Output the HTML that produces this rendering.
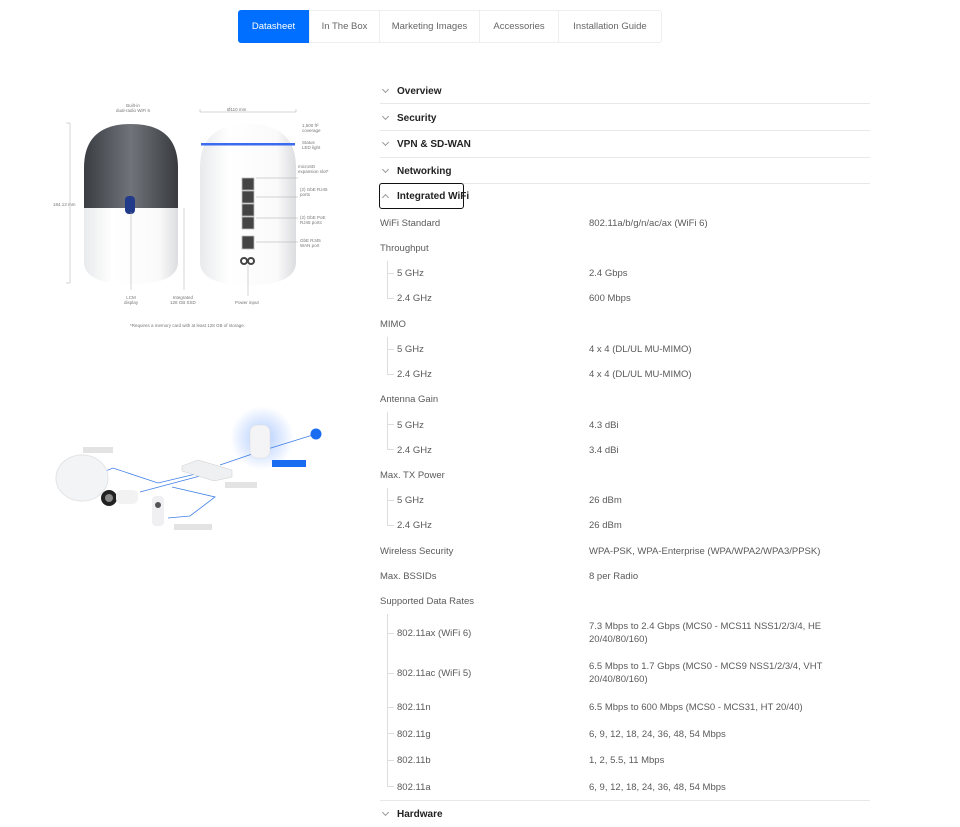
<!DOCTYPE html>
<html><head><meta charset="utf-8"><style>
*{margin:0;padding:0;box-sizing:border-box}
body{width:960px;height:827px;background:#fff;position:relative;overflow:hidden;font-family:"Liberation Sans",sans-serif;color:#555}
.a{position:absolute;white-space:nowrap}
.tabs{position:absolute;left:238px;top:10px;width:424px;height:33px;border:1px solid #eceef0;border-radius:3px;display:flex;font-size:9.5px;color:#666}
.tabs div{height:31px;line-height:31px;text-align:center;border-right:1px solid #eceef0}
.tabs .on{background:#006fff;color:#fff;border-radius:3px 0 0 3px;margin:-1px 0 -1px -1px;height:33px;line-height:33px}
.h{position:absolute;left:380px;font-size:10px;font-weight:bold;color:#222;transform:translateY(2px)}
.h i{display:inline-block;width:5px;height:5px;border-right:1px solid #999;border-bottom:1px solid #999;transform:rotate(45deg);margin:0 9px 2px 3px}
.ln{position:absolute;left:380px;width:490px;height:1px;background:#e6e8ea}
.l{position:absolute;left:380px;font-size:9.5px;color:#5a5a5a;transform:translateY(1px)}
.s{left:397px}
.v{position:absolute;left:589px;font-size:9.5px;color:#5a5a5a;line-height:13px;transform:translateY(1px)}
.vl{position:absolute;left:387px;width:1px;background:#ddd}
.tk{position:absolute;left:387px;width:7px;height:1px;background:#ddd}
.cap{position:absolute;font-size:4.5px;color:#777;text-align:center;line-height:5px}
</style></head><body>
<div class="tabs"><div class="on" style="width:72px">Datasheet</div><div style="width:70px">In The Box</div><div style="width:100px">Marketing Images</div><div style="width:79px">Accessories</div><div style="width:102px;border-right:none">Installation Guide</div></div>

<svg class="a" style="left:40px;top:95px" width="320" height="240" viewBox="40 95 320 240">
<defs><linearGradient id="g1" x1="0" x2="1"><stop offset="0" stop-color="#e9eaec"/><stop offset=".3" stop-color="#fff"/><stop offset=".8" stop-color="#fafafa"/><stop offset="1" stop-color="#dcdde0"/></linearGradient>
<linearGradient id="g2" x1="0" x2="1"><stop offset="0" stop-color="#3a3d42"/><stop offset=".5" stop-color="#70747a"/><stop offset="1" stop-color="#383a3e"/></linearGradient></defs>
<path d="M84 208 V168 Q84 124 131 124 Q178 124 178 168 V208Z" fill="url(#g2)"/>
<path d="M84 208 H178 V262 Q178 284 131 284 Q84 284 84 262Z" fill="url(#g1)"/>
<rect x="125" y="196" width="10" height="18" rx="4" fill="#223a8a"/>
<path d="M200 168 Q200 124 248 124 Q296 124 296 168 V262 Q296 285 248 285 Q200 285 200 262Z" fill="url(#g1)"/>
<rect x="201" y="143" width="94" height="2.5" fill="#3d6bf0"/>
<g fill="#444" stroke="#bbb" stroke-width=".8"><rect x="242" y="178" width="12" height="12"/><rect x="242" y="191" width="12" height="12"/><rect x="242" y="204" width="12" height="12"/><rect x="242" y="217" width="12" height="12"/><rect x="242" y="236" width="12" height="13"/></g>
<circle cx="244" cy="261" r="3" fill="none" stroke="#444" stroke-width="2"/><circle cx="251" cy="261" r="3" fill="none" stroke="#444" stroke-width="2"/>
<g stroke="#aaa" stroke-width=".5" fill="none"><path d="M66 123 H70 V283 H66"/><path d="M200 109 V112 H296 V109"/><path d="M131 212 V290"/><path d="M184 208 V290"/><path d="M248 265 V296"/><path d="M256 178 H298 M256 197 H298 M256 218 H298 M256 242 H298"/></g>
</svg>
<div class="cap" style="left:116px;top:103px">Built-in<br>dual-radio WiFi 6</div>
<div class="cap" style="left:227px;top:107px">Ø110 mm</div>
<div class="cap" style="left:53px;top:202px">184.13 mm</div>
<div class="cap" style="left:302px;top:123px;text-align:left">1,500 ft²<br>coverage</div>
<div class="cap" style="left:302px;top:140px;text-align:left">Status<br>LED light</div>
<div class="cap" style="left:298px;top:164px;text-align:left">microSD<br>expansion slot*</div>
<div class="cap" style="left:300px;top:187px;text-align:left">(2) GbE RJ45<br>ports</div>
<div class="cap" style="left:300px;top:215px;text-align:left">(2) GbE PoE<br>RJ45 ports</div>
<div class="cap" style="left:300px;top:238px;text-align:left">GbE RJ45<br>WAN port</div>
<div class="cap" style="left:124px;top:295px">LCM<br>display</div>
<div class="cap" style="left:170px;top:295px">Integrated<br>128 GB SSD</div>
<div class="cap" style="left:235px;top:300px">Power input</div>
<div class="cap" style="left:130px;top:323px">*Requires a memory card with at least 128 GB of storage.</div>

<svg class="a" style="left:40px;top:400px" width="300" height="140" viewBox="40 400 300 140">
<defs><radialGradient id="gl"><stop offset="0" stop-color="#7aa8ff" stop-opacity=".6"/><stop offset="1" stop-color="#7aa8ff" stop-opacity="0"/></radialGradient></defs>
<circle cx="262" cy="438" r="32" fill="url(#gl)"/>
<g stroke="#3f7fe6" stroke-width=".8" fill="none"><path d="M88 478 L113 468 L158 483 L200 473"/><path d="M140 492 L200 476"/><path d="M172 487 L215 497 L190 516 L168 518"/><path d="M220 465 L258 452 L316 434"/></g>
<ellipse cx="82" cy="478" rx="26" ry="23" fill="#f3f4f6" stroke="#e3e4e6"/>
<path d="M182 466 L198 460 L232 470 L232 477 L214 481 L182 471Z" fill="#eef0f2" stroke="#ccc" stroke-width=".5"/>
<rect x="250" y="425" width="20" height="33" rx="7" fill="#f4f4f6" stroke="#ddd" stroke-width=".5"/>
<circle cx="316" cy="434" r="5.5" fill="#1a6cf0"/>
<circle cx="109" cy="498" r="8" fill="#222"/><circle cx="109" cy="498" r="4" fill="#888"/>
<rect x="116" y="490" width="22" height="14" rx="5" fill="#f2f2f2"/>
<rect x="152" y="496" width="12" height="30" rx="4" fill="#f0f0f2"/><circle cx="158" cy="505" r="3" fill="#555"/>
<g fill="#e3e3e3"><rect x="83" y="447" width="30" height="6"/><rect x="225" y="482" width="32" height="6"/><rect x="174" y="524" width="38" height="6"/></g>
<rect x="272" y="460" width="34" height="7" fill="#1a6cf0"/>
</svg>

<div class="h" style="top:84px"><i></i>Overview</div><div class="ln" style="top:103px"></div>
<div class="h" style="top:111px"><i></i>Security</div><div class="ln" style="top:130px"></div>
<div class="h" style="top:137px"><i></i>VPN &amp; SD-WAN</div><div class="ln" style="top:157px"></div>
<div class="h" style="top:164px"><i></i>Networking</div><div class="ln" style="top:183px"></div>
<div class="a" style="left:379px;top:183px;width:85px;height:26px;border:1.5px solid #111;border-radius:3px"></div>
<div class="h" style="top:189px"><i style="transform:rotate(225deg);margin-bottom:-1px"></i>Integrated WiFi</div>

<div class="l" style="top:217px">WiFi Standard</div><div class="v" style="top:216px">802.11a/b/g/n/ac/ax (WiFi 6)</div>
<div class="l" style="top:242px">Throughput</div>
<div class="vl" style="top:261px;height:38px"></div><div class="tk" style="top:273px"></div><div class="tk" style="top:298px"></div>
<div class="l s" style="top:267px">5 GHz</div><div class="v" style="top:266px">2.4 Gbps</div>
<div class="l s" style="top:292px">2.4 GHz</div><div class="v" style="top:291px">600 Mbps</div>
<div class="l" style="top:318px">MIMO</div>
<div class="vl" style="top:337px;height:38px"></div><div class="tk" style="top:349px"></div><div class="tk" style="top:374px"></div>
<div class="l s" style="top:343px">5 GHz</div><div class="v" style="top:342px">4 x 4 (DL/UL MU-MIMO)</div>
<div class="l s" style="top:368px">2.4 GHz</div><div class="v" style="top:367px">4 x 4 (DL/UL MU-MIMO)</div>
<div class="l" style="top:393px">Antenna Gain</div>
<div class="vl" style="top:412px;height:38px"></div><div class="tk" style="top:424px"></div><div class="tk" style="top:449px"></div>
<div class="l s" style="top:419px">5 GHz</div><div class="v" style="top:418px">4.3 dBi</div>
<div class="l s" style="top:444px">2.4 GHz</div><div class="v" style="top:443px">3.4 dBi</div>
<div class="l" style="top:469px">Max. TX Power</div>
<div class="vl" style="top:488px;height:38px"></div><div class="tk" style="top:500px"></div><div class="tk" style="top:525px"></div>
<div class="l s" style="top:494px">5 GHz</div><div class="v" style="top:493px">26 dBm</div>
<div class="l s" style="top:519px">2.4 GHz</div><div class="v" style="top:518px">26 dBm</div>
<div class="l" style="top:545px">Wireless Security</div><div class="v" style="top:544px">WPA-PSK, WPA-Enterprise (WPA/WPA2/WPA3/PPSK)</div>
<div class="l" style="top:570px">Max. BSSIDs</div><div class="v" style="top:569px">8 per Radio</div>
<div class="l" style="top:595px">Supported Data Rates</div>
<div class="vl" style="top:614px;height:173px"></div>
<div class="tk" style="top:633px"></div><div class="tk" style="top:673px"></div><div class="tk" style="top:707px"></div><div class="tk" style="top:733px"></div><div class="tk" style="top:760px"></div><div class="tk" style="top:786px"></div>
<div class="l s" style="top:627px">802.11ax (WiFi 6)</div><div class="v" style="top:619px">7.3 Mbps to 2.4 Gbps (MCS0 - MCS11 NSS1/2/3/4, HE<br>20/40/80/160)</div>
<div class="l s" style="top:667px">802.11ac (WiFi 5)</div><div class="v" style="top:659px">6.5 Mbps to 1.7 Gbps (MCS0 - MCS9 NSS1/2/3/4, VHT<br>20/40/80/160)</div>
<div class="l s" style="top:701px">802.11n</div><div class="v" style="top:700px">6.5 Mbps to 600 Mbps (MCS0 - MCS31, HT 20/40)</div>
<div class="l s" style="top:728px">802.11g</div><div class="v" style="top:727px">6, 9, 12, 18, 24, 36, 48, 54 Mbps</div>
<div class="l s" style="top:754px">802.11b</div><div class="v" style="top:753px">1, 2, 5.5, 11 Mbps</div>
<div class="l s" style="top:781px">802.11a</div><div class="v" style="top:780px">6, 9, 12, 18, 24, 36, 48, 54 Mbps</div>
<div class="ln" style="top:800px"></div>
<div class="h" style="top:807px"><i></i>Hardware</div>
</body></html>
